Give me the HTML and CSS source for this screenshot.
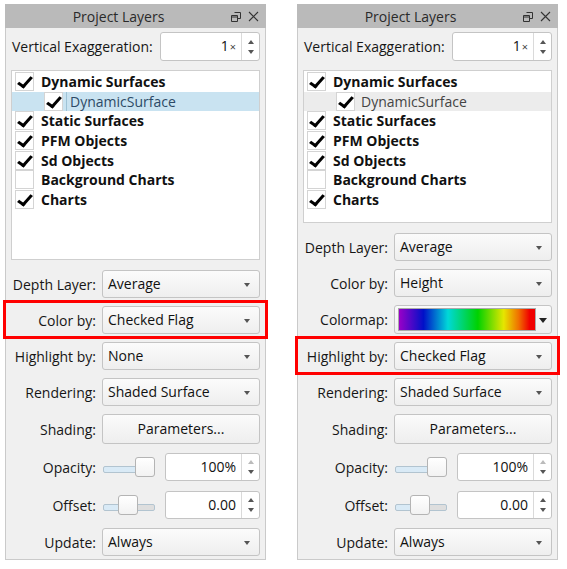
FILE: index.html
```html
<!DOCTYPE html>
<html lang="en">
<head>
<meta charset="UTF-8" />
<title>Project Layers</title>
<link rel="stylesheet" href="styles.css">
</head>
<body>
<div class="panels">

  <!-- left: colour by checked flag -->
  <section class="panel">
    <header class="titlebar">
      <span class="title">Project Layers</span>
      <span class="title-icons">
        <svg width="10" height="10" viewBox="0 0 10 10"><path d="M3.5 0.5h6v6h-3M0.5 3.5h6v6h-6z M0.5 5h6" fill="none" stroke="#333" stroke-width="1"/></svg>
        <svg width="11" height="11" viewBox="0 0 11 11"><path d="M1 1l9 9M10 1l-9 9" stroke="#333" stroke-width="1.1"/></svg>
      </span>
    </header>
    <div class="panel-body">
      <div class="exag-row">
        <span class="label">Vertical Exaggeration:</span>
        <div class="spin exag"><span class="spin-value">1<span class="times">×</span></span><span class="spin-buttons"><i class="up"></i><i class="down"></i></span></div>
      </div>
      <ul class="layer-list tall">
        <li class="group"><span class="check on"></span><span class="name">Dynamic Surfaces</span></li>
        <li class="child selected"><span class="check on"></span><span class="name">DynamicSurface</span></li>
        <li class="group"><span class="check on"></span><span class="name">Static Surfaces</span></li>
        <li class="group"><span class="check on"></span><span class="name">PFM Objects</span></li>
        <li class="group"><span class="check on"></span><span class="name">Sd Objects</span></li>
        <li class="group"><span class="check"></span><span class="name">Background Charts</span></li>
        <li class="group"><span class="check on"></span><span class="name">Charts</span></li>
      </ul>
      <div class="form">
        <div class="row"><span class="label">Depth Layer:</span><div class="combo">Average</div></div>
        <div class="row marked"><span class="label">Color by:</span><div class="combo">Checked Flag</div></div>
        <div class="row"><span class="label">Highlight by:</span><div class="combo">None</div></div>
        <div class="row"><span class="label">Rendering:</span><div class="combo">Shaded Surface</div></div>
        <div class="row high"><span class="label">Shading:</span><div class="button">Parameters...</div></div>
        <div class="row high"><span class="label">Opacity:</span>
          <div class="slider-spin">
            <div class="slider"><div class="groove full"></div><div class="handle at-end"></div></div>
            <div class="spin"><span class="spin-value">100%</span><span class="spin-buttons"><i class="up off"></i><i class="down"></i></span></div>
          </div>
        </div>
        <div class="row high"><span class="label">Offset:</span>
          <div class="slider-spin">
            <div class="slider"><div class="groove half"></div><div class="handle at-mid"></div></div>
            <div class="spin"><span class="spin-value">0.00</span><span class="spin-buttons"><i class="up"></i><i class="down"></i></span></div>
          </div>
        </div>
        <div class="row"><span class="label">Update:</span><div class="combo">Always</div></div>
      </div>
    </div>
  </section>

  <!-- right: colour by height, highlight by checked flag -->
  <section class="panel">
    <header class="titlebar">
      <span class="title">Project Layers</span>
      <span class="title-icons">
        <svg width="10" height="10" viewBox="0 0 10 10"><path d="M3.5 0.5h6v6h-3M0.5 3.5h6v6h-6z M0.5 5h6" fill="none" stroke="#333" stroke-width="1"/></svg>
        <svg width="11" height="11" viewBox="0 0 11 11"><path d="M1 1l9 9M10 1l-9 9" stroke="#333" stroke-width="1.1"/></svg>
      </span>
    </header>
    <div class="panel-body">
      <div class="exag-row">
        <span class="label">Vertical Exaggeration:</span>
        <div class="spin exag"><span class="spin-value">1<span class="times">×</span></span><span class="spin-buttons"><i class="up"></i><i class="down"></i></span></div>
      </div>
      <ul class="layer-list short">
        <li class="group"><span class="check on"></span><span class="name">Dynamic Surfaces</span></li>
        <li class="child hovered"><span class="check on"></span><span class="name">DynamicSurface</span></li>
        <li class="group"><span class="check on"></span><span class="name">Static Surfaces</span></li>
        <li class="group"><span class="check on"></span><span class="name">PFM Objects</span></li>
        <li class="group"><span class="check on"></span><span class="name">Sd Objects</span></li>
        <li class="group"><span class="check"></span><span class="name">Background Charts</span></li>
        <li class="group"><span class="check on"></span><span class="name">Charts</span></li>
      </ul>
      <div class="form">
        <div class="row"><span class="label">Depth Layer:</span><div class="combo">Average</div></div>
        <div class="row"><span class="label">Color by:</span><div class="combo">Height</div></div>
        <div class="row ramp-row"><span class="label">Colormap:</span><div class="combo colormap"><span class="ramp"></span></div></div>
        <div class="row marked"><span class="label">Highlight by:</span><div class="combo">Checked Flag</div></div>
        <div class="row"><span class="label">Rendering:</span><div class="combo">Shaded Surface</div></div>
        <div class="row high"><span class="label">Shading:</span><div class="button">Parameters...</div></div>
        <div class="row high"><span class="label">Opacity:</span>
          <div class="slider-spin">
            <div class="slider"><div class="groove full"></div><div class="handle at-end"></div></div>
            <div class="spin"><span class="spin-value">100%</span><span class="spin-buttons"><i class="up off"></i><i class="down"></i></span></div>
          </div>
        </div>
        <div class="row high"><span class="label">Offset:</span>
          <div class="slider-spin">
            <div class="slider"><div class="groove half"></div><div class="handle at-mid"></div></div>
            <div class="spin"><span class="spin-value">0.00</span><span class="spin-buttons"><i class="up"></i><i class="down"></i></span></div>
          </div>
        </div>
        <div class="row"><span class="label">Update:</span><div class="combo">Always</div></div>
      </div>
    </div>
  </section>

</div>
</body>
</html>
```

FILE: styles.css
```css
:root {
  --panel-bg: #f0f0f0;
  --panel-border: #cacaca;
  --ctrl-border: #c4c4c4;
  --text: #161616;
  --font: "Open Sans", "Noto Sans", sans-serif;
}
* {
  box-sizing: border-box;
}
html, body {
  margin: 0;
  background: #fff;
}
body {
  padding: 4px 0 0 5px;
  font-family: var(--font);
  font-size: 14px;
  color: var(--text);
}
.panels {
  display: flex;
  gap: 31px;
  align-items: stretch;
}
.panel {
  width: 261px;
  height: 556px;
  background: var(--panel-bg);
  border: 1px solid var(--panel-border);
  border-top: none;
  display: flex;
  flex-direction: column;
}
.titlebar {
  height: 24px;
  margin: 0 -1px;
  background: #bababa;
  display: flex;
  align-items: center;
  position: relative;
  padding-right: 34px;
}
.title {
  flex: 1;
  text-align: center;
  font-size: 14px;
  color: #2a2a2a;
}
.title-icons {
  position: absolute;
  right: 7px;
  top: 7px;
  display: flex;
  gap: 7px;
  align-items: center;
}
.panel-body {
  padding: 4px 5px 3px 6px;
  display: flex;
  flex-direction: column;
}

/* vertical exaggeration */
.exag-row {
  height: 29px;
  display: flex;
  align-items: center;
  justify-content: space-between;
}
.spin.exag {
  width: 100px;
  height: 29px;
}

/* spin boxes */
.spin {
  display: flex;
  height: 28px;
  background: #fff;
  border: 1px solid var(--ctrl-border);
  border-radius: 3px;
}
.spin-value {
  flex: 1;
  text-align: right;
  padding-right: 5px;
  line-height: 26px;
  color: #111;
}
.times {
  font-size: 11px;
  margin-left: 1px;
  color: #444;
}
.spin-buttons {
  width: 18px;
  border-left: 1px solid #dadada;
  display: flex;
  flex-direction: column;
  align-items: center;
  justify-content: center;
  gap: 6px;
}
.spin-buttons i {
  width: 0;
  height: 0;
  border-left: 3.5px solid transparent;
  border-right: 3.5px solid transparent;
}
.spin-buttons .up {
  border-bottom: 4px solid #555;
}
.spin-buttons .up.off {
  border-bottom-color: #bbb;
}
.spin-buttons .down {
  border-top: 4px solid #555;
}

/* layer tree */
.layer-list {
  list-style: none;
  margin: 9px 0 0 -1px;
  padding: 1px 0;
  background: #fff;
  border: 1px solid #cfcfcf;
}
.layer-list.tall {
  height: 190px;
}
.layer-list.short {
  height: 153px;
}
.layer-list li {
  height: 19.6px;
  display: flex;
  align-items: center;
  padding-left: 3px;
}
.layer-list .group .name {
  font-weight: 700;
  margin-left: 7px;
  color: #111;
}
.layer-list .child {
  padding-left: 32px;
}
.layer-list .child .name {
  margin-left: 3px;
  padding-left: 3px;
  height: 100%;
  line-height: 19px;
}
.layer-list .selected {
  background: #c9e3f1;
}
.layer-list .selected .name {
  flex: 1;
  color: #2d4a66;
  border-left: 1px solid #9fc3d6;
}
.layer-list .hovered {
  background: #ececec;
}
.layer-list .hovered .name {
  color: #444;
}
.check {
  width: 19px;
  height: 19px;
  background: #fff;
  border: 1px solid #d4d4d4;
  flex: none;
  position: relative;
}
.check.on::after {
  content: "";
  position: absolute;
  left: 5px;
  top: 1px;
  width: 5px;
  height: 11px;
  border-right: 3px solid #000;
  border-bottom: 3px solid #000;
  transform: rotate(36deg) skewX(-6deg);
}

/* form rows */
.form {
  margin-top: 10px;
  display: flex;
  flex-direction: column;
  gap: 8px;
}
.row {
  display: grid;
  grid-template-columns: 84px 1fr;
  column-gap: 6px;
  align-items: center;
  height: 28px;
  position: relative;
}
.row.high {
  height: 30px;
}
.row.ramp-row {
  height: 29px;
}
.row .label {
  text-align: right;
  white-space: nowrap;
}
.row.marked::after {
  content: "";
  position: absolute;
  left: -9px;
  right: -8px;
  top: -6px;
  bottom: -5px;
  border: 3px solid #f00;
}
.combo, .button {
  height: 28px;
  border: 1px solid var(--ctrl-border);
  border-radius: 3px;
  background: linear-gradient(#fbfbfb, #eeeeee);
  line-height: 26px;
  padding-left: 5px;
  position: relative;
  color: #111;
}
.combo::after {
  content: "";
  position: absolute;
  right: 9px;
  top: 12px;
  border-left: 3.5px solid transparent;
  border-right: 3.5px solid transparent;
  border-top: 4px solid #555;
}
.button {
  height: 30px;
  line-height: 28px;
  padding: 0;
  text-align: center;
}
.combo.colormap {
  height: 29px;
  padding: 2px 15px 2px 3px;
}
.combo.colormap::after {
  right: 4px;
  border-left-width: 4.5px;
  border-right-width: 4.5px;
  border-top-width: 5px;
  border-top-color: #222;
}
.ramp {
  display: block;
  height: 23px;
  border: 1px solid #aaa;
  background: linear-gradient(to right, #9a00c8 0%, #0010c8 18%, #00d8d8 36%, #00d200 58%, #e6e600 77%, #f07000 88%, #f00000 96%);
}

/* slider + spin */
.slider-spin {
  display: flex;
  align-items: center;
  gap: 10px;
  padding-left: 1px;
}
.slider-spin .spin {
  flex: 1;
}
.slider {
  width: 52px;
  height: 20px;
  position: relative;
  flex: none;
}
.groove {
  position: absolute;
  left: 0;
  right: 0;
  top: 9px;
  height: 7px;
  border: 1px solid #b2c4d0;
  border-radius: 2px;
}
.groove.full {
  background: #d9eaf6;
}
.groove.half {
  background: linear-gradient(to right, #d9eaf6 50%, #dedede 50%);
}
.handle {
  position: absolute;
  top: 0;
  width: 20px;
  height: 20px;
  background: linear-gradient(#ffffff, #f2f2f2);
  border: 1px solid #b4b4b4;
  border-radius: 3px;
}
.handle.at-end {
  right: 0;
}
.handle.at-mid {
  left: 15px;
}
```
